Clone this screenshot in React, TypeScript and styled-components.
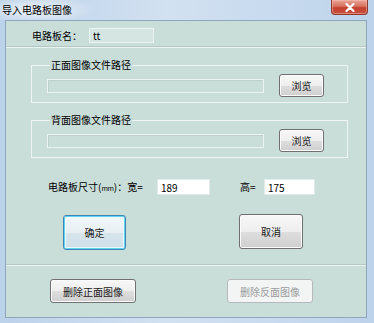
import React from "react";
import styled, { createGlobalStyle } from "styled-components";

const GlobalStyle = createGlobalStyle`
  html, body {
    margin: 0;
    padding: 0;
    background: #c3d7ee;
  }
  body {
    font-family: "Noto Sans CJK SC", "Noto Sans", sans-serif;
    font-size: 10px;
    color: #000;
  }
`;

const Window = styled.div`
  width: 374px;
  height: 323px;
  display: flex;
  flex-direction: column;
  background: linear-gradient(90deg, #bcd2ea 0%, #d2e1f1 45%, #c9dbef 70%, #bdd3eb 100%);
  overflow: hidden;
`;

const TitleBar = styled.div`
  height: 20px;
  flex: none;
  display: flex;
  justify-content: space-between;
  align-items: flex-start;
  background: radial-gradient(ellipse 60px 14px at 36px 10px, rgba(255, 255, 255, 0.75), rgba(255, 255, 255, 0) 100%);
`;

const Title = styled.span`
  padding: 3px 0 0 2px;
  line-height: 14px;
  font-size: 10px;
  color: #000;
`;

const CloseButton = styled.div`
  width: 37px;
  height: 15px;
  margin-right: 6px;
  box-sizing: border-box;
  border: 1px solid #8c3a30;
  border-top: none;
  border-radius: 0 0 4px 4px;
  background: linear-gradient(#e9a597 0%, #d8705f 45%, #c4402f 55%, #c9503e 100%);
  box-shadow: inset 0 0 0 1px rgba(255, 200, 190, 0.45);
  display: flex;
  align-items: center;
  justify-content: center;
`;

const Frame = styled.div`
  flex: 1;
  display: flex;
  padding: 0 7px 5px 5px;
`;

const Client = styled.div`
  flex: 1;
  display: flex;
  flex-direction: column;
  border: 1px solid #8fa6bd;
  background: #c9ddd9;
`;

const NameRow = styled.div`
  display: flex;
  align-items: center;
  gap: 7px;
  height: 15px;
  margin-top: 7px;
  padding-left: 26px;
`;

const Label = styled.span`
  line-height: 12px;
  white-space: nowrap;
`;

const Field = styled.input<{ $w: number; $h: number; $tone: "name" | "path" | "edit" }>`
  width: ${(p) => p.$w}px;
  height: ${(p) => p.$h}px;
  box-sizing: border-box;
  margin: 0;
  padding: 0 3px;
  font-family: "Noto Sans CJK SC", "Noto Sans", sans-serif;
  font-size: 10px;
  color: #000;
  outline: none;
  border: 1px solid ${(p) => (p.$tone === "edit" ? "#e3ebe9" : "#eaf4f2")};
  background: ${(p) => (p.$tone === "edit" ? "#fff" : p.$tone === "name" ? "#d5e5e1" : "#c9ddd9")};
  box-shadow: ${(p) => (p.$tone === "path" ? "inset 1px 1px 0 #bed1cd" : "none")};
`;

const Separator = styled.div<{ $top: number }>`
  margin-top: ${(p) => p.$top}px;
  border-top: 1px solid #b3c7c3;
  border-bottom: 1px solid #eaf4f2;
`;

const Group = styled.fieldset<{ $top: number }>`
  width: 317px;
  box-sizing: border-box;
  margin: ${(p) => p.$top}px 0 0 25px;
  padding: 3px 20px 5px 15px;
  border: 1px solid #eef6f4;
  display: flex;
  align-items: center;
  gap: 15px;
`;

const GroupTitle = styled.legend`
  margin-left: 3px;
  padding: 0 1px;
  line-height: 12px;
  font-size: 10px;
`;

const Button = styled.button<{ $w: number; $h: number; $kind?: "normal" | "focus" | "disabled" }>`
  width: ${(p) => p.$w}px;
  height: ${(p) => p.$h}px;
  box-sizing: border-box;
  margin: 0;
  padding: 0;
  font-family: "Noto Sans CJK SC", "Noto Sans", sans-serif;
  font-size: 10px;
  border-radius: 3px;
  color: ${(p) => (p.$kind === "disabled" ? "#9a9c9e" : "#1a1a1a")};
  border: 1px solid
    ${(p) => (p.$kind === "disabled" ? "#b4b9bc" : p.$kind === "focus" ? "#3c86b4" : "#707070")};
  background: ${(p) =>
    p.$kind === "disabled"
      ? "#f3f4f4"
      : p.$kind === "focus"
        ? "linear-gradient(#f3f8fa 0%, #e6eff3 50%, #d7e5ec 51%, #cfe0e9 100%)"
        : "linear-gradient(#f8f8f8 0%, #eeeeee 50%, #dedede 51%, #cfcfcf 100%)"};
  box-shadow: ${(p) =>
    p.$kind === "focus"
      ? "inset 0 0 0 1px #62d3f0, inset 0 0 0 2px #e9f8fc"
      : p.$kind === "disabled"
        ? "none"
        : "inset 0 0 0 1px #fbfbfb"};
`;

const SizeRow = styled.div`
  display: grid;
  grid-template-columns: 109px 53px 30px 24px 51px;
  align-items: center;
  height: 16px;
  margin-top: 21px;
  padding-left: 42px;
`;

const Unit = styled.span`
  font-size: 7px;
  letter-spacing: -0.3px;
`;

const ButtonRow = styled.div<{ $top: number; $left: number; $gap: number }>`
  display: flex;
  align-items: flex-start;
  gap: ${(p) => p.$gap}px;
  margin-top: ${(p) => p.$top}px;
  padding-left: ${(p) => p.$left}px;
`;

const CloseGlyph = () => (
  <svg width="12" height="9" viewBox="0 0 12 9">
    <path d="M2.5 1 L9.5 8 M9.5 1 L2.5 8" stroke="#fff" strokeWidth="2.2" strokeLinecap="round" />
  </svg>
);

export default function App() {
  return (
    <>
      <GlobalStyle />
      <Window>
        <TitleBar>
          <Title>导入电路板图像</Title>
          <CloseButton>
            <CloseGlyph />
          </CloseButton>
        </TitleBar>
        <Frame>
          <Client>
            <NameRow>
              <Label>电路板名：</Label>
              <Field $w={65} $h={15} $tone="name" readOnly value="tt" />
            </NameRow>
            <Separator $top={3} />

            <Group $top={11}>
              <GroupTitle>正面图像文件路径</GroupTitle>
              <Field $w={217} $h={14} $tone="path" readOnly value="" />
              <Button $w={45} $h={23}>浏览</Button>
            </Group>

            <Group $top={11}>
              <GroupTitle>背面图像文件路径</GroupTitle>
              <Field $w={217} $h={14} $tone="path" readOnly value="" />
              <Button $w={45} $h={23}>浏览</Button>
            </Group>

            <SizeRow>
              <Label>
                电路板尺寸(<Unit>mm</Unit>)：宽=
              </Label>
              <Field $w={53} $h={16} $tone="edit" readOnly value="189" />
              <span />
              <Label>高=</Label>
              <Field $w={51} $h={16} $tone="edit" readOnly value="175" />
            </SizeRow>

            <ButtonRow $top={19} $left={57} $gap={113}>
              <Button $w={63} $h={35} $kind="focus" style={{ marginTop: 1 }}>
                确定
              </Button>
              <Button $w={64} $h={35}>取消</Button>
            </ButtonRow>

            <Separator $top={14} />

            <ButtonRow $top={13} $left={44} $gap={91}>
              <Button $w={86} $h={24}>删除正面图像</Button>
              <Button $w={86} $h={24} $kind="disabled" disabled>
                删除反面图像
              </Button>
            </ButtonRow>
          </Client>
        </Frame>
      </Window>
    </>
  );
}
